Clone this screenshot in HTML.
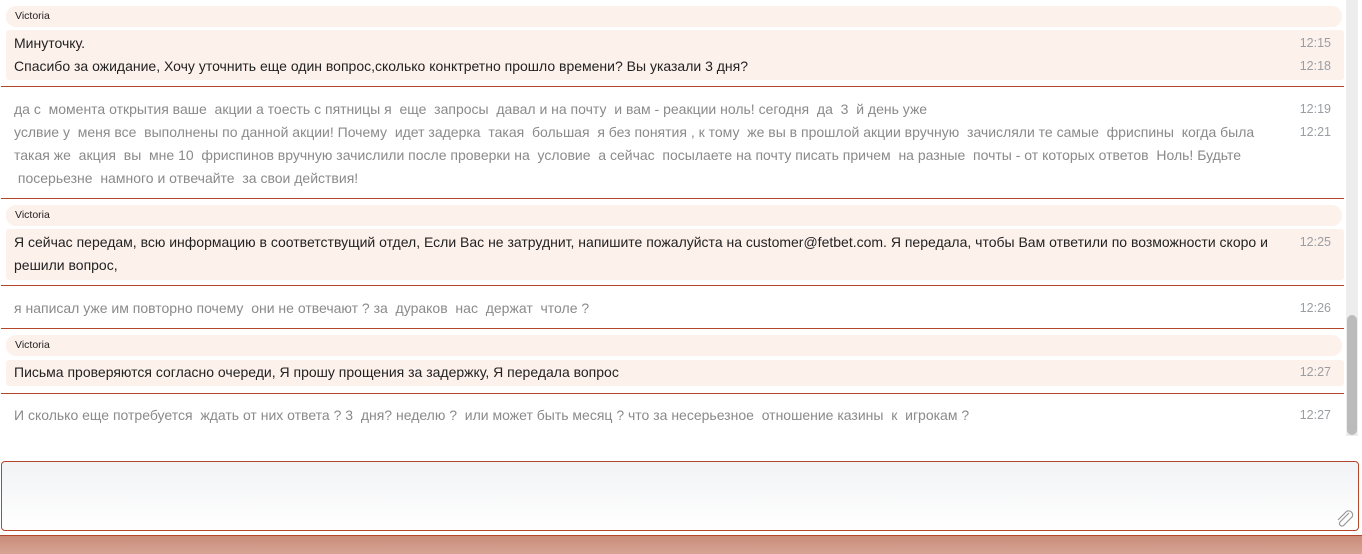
<!DOCTYPE html>
<html><head><meta charset="utf-8"><style>
*{margin:0;padding:0;box-sizing:border-box}
body{width:1362px;height:554px;overflow:hidden;background:#fff;font-family:"Liberation Sans",Arial,sans-serif;position:relative}
.a{position:absolute}
.name{position:absolute;left:6px;width:1336px;height:21px;background:#fdf1ec;border-radius:10px;font-size:10.5px;color:#222;padding:4px 0 0 9px}
.msg{position:absolute;left:6px;width:1338px;background:#fdf1ec;border-radius:3px}
.sep{position:absolute;left:1px;width:1343px;height:1px;background:#b5462a}
.t{position:absolute;left:14px;font-size:14px;line-height:16px;white-space:nowrap}
.d{color:#222}.u{color:#8a8a8a}
.tm{position:absolute;left:1290px;width:41px;text-align:right;font-size:12.5px;color:#9a9ea3;line-height:16px}
</style></head><body>
<div class="a" style="left:1346px;top:0;width:12px;height:436px;background:#ededed"></div>
<div class="a" style="left:1347px;top:315px;width:10px;height:120px;background:#bbb;border-radius:5px"></div>

<div class="name" style="top:6px">Victoria</div>
<div class="msg" style="top:30px;height:50px"></div>
<div class="t d" style="top:35px">Минуточку.</div><div class="tm" style="top:35px">12:15</div>
<div class="t d" style="top:58px">Спасибо за ожидание, Хочу уточнить еще один вопрос,сколько конктретно прошло времени? Вы указали 3 дня?</div><div class="tm" style="top:58px">12:18</div>
<div class="sep" style="top:86px"></div>

<div class="t u" style="top:101px">да с&nbsp; момента открытия ваше&nbsp; акции а тоесть с пятницы я&nbsp; еще&nbsp; запросы&nbsp; давал и на почту&nbsp; и вам - реакции ноль! сегодня&nbsp; да&nbsp; 3&nbsp; й день уже</div><div class="tm" style="top:101px">12:19</div>
<div class="t u" style="top:124px">услвие у&nbsp; меня все&nbsp; выполнены по данной акции! Почему&nbsp; идет задерка&nbsp; такая&nbsp; большая&nbsp; я без понятия , к тому&nbsp; же вы в прошлой акции вручную&nbsp; зачисляли те самые&nbsp; фриспины&nbsp; когда была</div><div class="tm" style="top:124px">12:21</div>
<div class="t u" style="top:147px">такая же&nbsp; акция&nbsp; вы&nbsp; мне 10&nbsp; фриспинов вручную зачислили после проверки на&nbsp; условие&nbsp; а сейчас&nbsp; посылаете на почту писать причем&nbsp; на разные&nbsp; почты - от которых ответов&nbsp; Ноль! Будьте</div>
<div class="t u" style="top:170px">&nbsp;посерьезне&nbsp; намного и отвечайте&nbsp; за свои действия!</div>
<div class="sep" style="top:198px"></div>

<div class="name" style="top:205px">Victoria</div>
<div class="msg" style="top:229px;height:51px"></div>
<div class="t d" style="top:234px">Я сейчас передам, всю информацию в соответствущий отдел, Если Вас не затруднит, напишите пожалуйста на customer@fetbet.com. Я передала, чтобы Вам ответили по возможности скоро и</div><div class="tm" style="top:234px">12:25</div>
<div class="t d" style="top:257px">решили вопрос,</div>
<div class="sep" style="top:285px"></div>

<div class="t u" style="top:300px">я написал уже им повторно почему&nbsp; они не отвечают ? за&nbsp; дураков&nbsp; нас&nbsp; держат&nbsp; чтоле ?</div><div class="tm" style="top:300px">12:26</div>
<div class="sep" style="top:328px"></div>

<div class="name" style="top:335px">Victoria</div>
<div class="msg" style="top:360px;height:26px"></div>
<div class="t d" style="top:364px">Письма проверяются согласно очереди, Я прошу прощения за задержку, Я передала вопрос</div><div class="tm" style="top:364px">12:27</div>
<div class="sep" style="top:393px"></div>

<div class="t u" style="top:407px">И сколько еще потребуется&nbsp; ждать от них ответа ? 3&nbsp; дня? неделю ?&nbsp; или может быть месяц ? что за несерьезное&nbsp; отношение казины&nbsp; к&nbsp; игрокам ?</div><div class="tm" style="top:407px">12:27</div>

<div class="a" style="left:1px;top:461px;width:1358px;height:70px;border:1px solid #b5462a;border-radius:4px;background:linear-gradient(#f2f3f5,#fff)"></div>
<svg class="a" style="left:1335px;top:509px" width="20" height="20" viewBox="0 0 20 20"><path d="M14 4 L5 13 a2.5 2.5 0 0 0 3.5 3.5 L17 8 a4 4 0 0 0 -5.5 -5.5 L3 11" fill="none" stroke="#999" stroke-width="1.2"/></svg>
<div class="a" style="left:0;top:535px;width:1362px;height:19px;background:linear-gradient(#c98b78,#d6a495)"></div>
<div class="a" style="left:0;top:535px;width:1362px;height:1px;background:#b5462a"></div>
</body></html>
